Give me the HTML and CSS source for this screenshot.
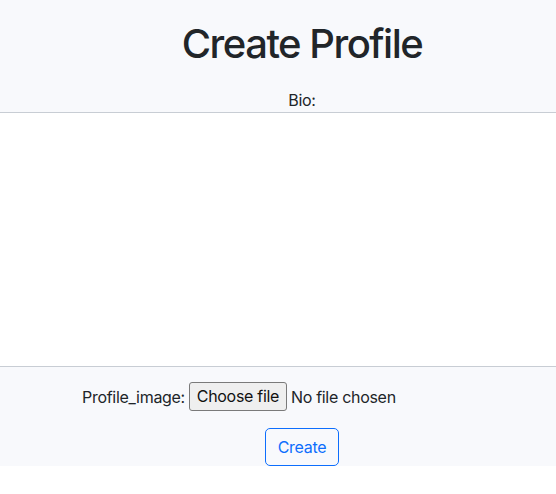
FILE: index.html
```html
<!DOCTYPE html>
<html>
<head>
<meta charset="utf-8">
<link rel="stylesheet" href="styles.css">
</head>
<body>
<div class="page">
  <h1 class="title">Create Profile</h1>
  <form class="form">
    <label class="bio-label" for="bio">Bio:</label>
    <textarea class="bio" id="bio"></textarea>
    <div class="file-row">
      <span class="file-label">Profile_image:</span>
      <span class="file-input">
        <span class="file-btn">Choose file</span>
        <span class="file-text">No file chosen</span>
      </span>
    </div>
    <div class="submit-row">
      <button type="button" class="btn-create">Create</button>
    </div>
  </form>
</div>
</body>
</html>
```
FILE: styles.css
```css
html, body {
  margin: 0;
  padding: 0;
  background: #ffffff;
}
body {
  font-family: Inter, "Liberation Sans", sans-serif;
  font-size: 16px;
  line-height: 1.5;
  color: #212529;
  letter-spacing: -0.3px;
}
.page {
  box-sizing: border-box;
  width: 556px;
  padding-left: 48px;
  background: #f8f9fc;
  text-align: center;
}
.title {
  margin: 0;
  padding-top: 20px;
  font-size: 40px;
  font-weight: 500;
  line-height: 1.2;
  letter-spacing: -1.5px;
}
.form {
  display: flex;
  flex-direction: column;
  align-items: center;
}
.bio-label {
  display: block;
  margin-top: 20px;
  line-height: 24px;
}
.bio {
  display: block;
  align-self: stretch;
  box-sizing: border-box;
  height: 255px;
  margin: 0 0 0 -48px;
  border: none;
  border-top: 1px solid #c8cdd4;
  border-bottom: 1px solid #c8cdd4;
  background: #ffffff;
  resize: none;
}
.file-row {
  display: flex;
  align-items: center;
  gap: 4px;
  margin-top: 15px;
  height: 29px;
}
.file-label {
  line-height: 24px;
}
.file-input {
  display: flex;
  align-items: center;
  width: 333px;
  gap: 4px;
}
.file-btn {
  box-sizing: border-box;
  height: 29px;
  width: 98px;
  border: 1px solid #7a7a7a;
  border-radius: 3px;
  background: #efefef;
  color: #111;
  line-height: 27px;
  text-align: center;
}
.file-text {
  line-height: 24px;
}
.submit-row {
  margin-top: 17px;
}
.btn-create {
  display: block;
  box-sizing: border-box;
  height: 38px;
  padding: 6px 12px;
  border: 1px solid #0d6efd;
  border-radius: 5px;
  background: transparent;
  color: #0d6efd;
  font-family: Inter, "Liberation Sans", sans-serif;
  font-size: 16px;
  line-height: 24px;
  letter-spacing: -0.3px;
}
```
